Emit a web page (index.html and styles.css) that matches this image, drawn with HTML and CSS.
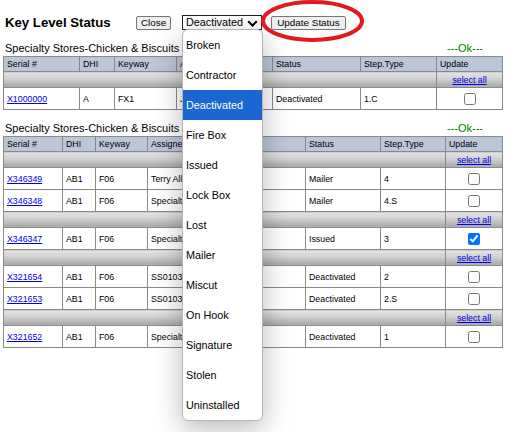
FILE: index.html
```html
<!DOCTYPE html>
<html>
<head>
<meta charset="utf-8">
<title>Key Level Status</title>
<link rel="stylesheet" href="styles.css">
</head>
<body>
<div class="page">
  <div class="topbar">
    <h1 class="title">Key Level Status</h1>
    <button class="btn btn-close">Close</button>
    <div class="select">
      <span>Deactivated</span>
      <svg class="chev" width="11" height="7" viewBox="0 0 11 7"><path d="M1.2 1.2 L5.5 5.5 L9.8 1.2" fill="none" stroke="#000" stroke-width="2"/></svg>
    </div>
    <button class="btn btn-update">Update Status</button>
  </div>

  <section class="group g1">
    <div class="group-head"><span class="store">Specialty Stores-Chicken &amp; Biscuits</span><span class="ok">---Ok---</span></div>
    <table class="keys t1">
      <colgroup><col class="c1"><col class="c2"><col class="c3"><col class="c4"><col class="c5"><col class="c6"><col class="c7"></colgroup>
      <tr class="hdr"><td>Serial #</td><td>DHI</td><td>Keyway</td><td>Assigned To</td><td>Status</td><td>Step.Type</td><td>Update</td></tr>
      <tr class="grp"><td colspan="6"></td><td class="ctr"><a href="#">select all</a></td></tr>
      <tr class="row"><td><a href="#">X1000000</a></td><td>A</td><td>FX1</td><td>John Smith</td><td>Deactivated</td><td>1.C</td><td class="ctr"><input type="checkbox"></td></tr>
    </table>
  </section>

  <section class="group g2">
    <div class="group-head"><span class="store">Specialty Stores-Chicken &amp; Biscuits</span><span class="ok">---Ok---</span></div>
    <table class="keys t2">
      <colgroup><col class="c1"><col class="c2"><col class="c3"><col class="c4"><col class="c5"><col class="c6"><col class="c7"></colgroup>
      <tr class="hdr"><td>Serial #</td><td>DHI</td><td>Keyway</td><td>Assigned To</td><td>Status</td><td>Step.Type</td><td>Update</td></tr>
      <tr class="grp"><td colspan="6"></td><td class="ctr"><a href="#">select all</a></td></tr>
      <tr class="row"><td><a href="#">X346349</a></td><td>AB1</td><td>F06</td><td>Terry Allen</td><td>Mailer</td><td>4</td><td class="ctr"><input type="checkbox"></td></tr>
      <tr class="row"><td><a href="#">X346348</a></td><td>AB1</td><td>F06</td><td>Specialty Stores</td><td>Mailer</td><td>4.S</td><td class="ctr"><input type="checkbox"></td></tr>
      <tr class="grp"><td colspan="6"></td><td class="ctr"><a href="#">select all</a></td></tr>
      <tr class="row"><td><a href="#">X346347</a></td><td>AB1</td><td>F06</td><td>Specialty Stores</td><td>Issued</td><td>3</td><td class="ctr"><input type="checkbox" checked></td></tr>
      <tr class="grp"><td colspan="6"></td><td class="ctr"><a href="#">select all</a></td></tr>
      <tr class="row"><td><a href="#">X321654</a></td><td>AB1</td><td>F06</td><td>SS01031 Store</td><td>Deactivated</td><td>2</td><td class="ctr"><input type="checkbox"></td></tr>
      <tr class="row"><td><a href="#">X321653</a></td><td>AB1</td><td>F06</td><td>SS01031 Store</td><td>Deactivated</td><td>2.S</td><td class="ctr"><input type="checkbox"></td></tr>
      <tr class="grp"><td colspan="6"></td><td class="ctr"><a href="#">select all</a></td></tr>
      <tr class="row"><td><a href="#">X321652</a></td><td>AB1</td><td>F06</td><td>Specialty Stores</td><td>Deactivated</td><td>1</td><td class="ctr"><input type="checkbox"></td></tr>
    </table>
  </section>

  <ul class="dropdown">
    <li>Broken</li>
    <li>Contractor</li>
    <li class="sel">Deactivated</li>
    <li>Fire Box</li>
    <li>Issued</li>
    <li>Lock Box</li>
    <li>Lost</li>
    <li>Mailer</li>
    <li>Miscut</li>
    <li>On Hook</li>
    <li>Signature</li>
    <li>Stolen</li>
    <li>Uninstalled</li>
  </ul>

  <svg class="circle" width="106" height="44" viewBox="0 0 106 44"><ellipse cx="52.5" cy="21" rx="49.5" ry="19" fill="none" stroke="#e01a1f" stroke-width="4"/></svg>
</div>
</body>
</html>
```

FILE: styles.css
```css
html, body {
  margin: 0;
  padding: 0;
  background: #fff;
}
body {
  font-family: "Liberation Sans", Arial, sans-serif;
  color: #000;
}
.page {
  position: relative;
  width: 515px;
  height: 432px;
  overflow: hidden;
}
.topbar {
  display: flex;
  align-items: center;
  height: 15px;
  padding: 15px 0 0 5px;
}
.title {
  margin: 0;
  font-size: 13.2px;
  font-weight: bold;
  line-height: 15px;
  width: 106px;
}
.btn {
  font-family: "Liberation Sans", Arial, sans-serif;
  font-size: 9.9px;
  height: 14px;
  line-height: 12px;
  padding: 0 5px;
  background: #efefef;
  border: 1px solid #767676;
  border-radius: 2px;
  color: #000;
  box-sizing: border-box;
}
.btn-close {
  margin-left: 25px;
  width: 35px;
  padding: 0;
}
.btn-update {
  margin-left: 9px;
  width: 75px;
  padding: 0;
}
.select {
  margin-left: 11px;
  width: 80px;
  height: 15px;
  box-sizing: border-box;
  border: 1px solid #222;
  display: flex;
  align-items: center;
  padding-left: 3px;
  font-size: 10.8px;
  line-height: 13px;
}
.select span {
  flex: 1;
}
.chev {
  margin-right: 3px;
  margin-top: 1px;
}
.group {
  padding-left: 3px;
}
.g1 {
  margin-top: 12px;
}
.g2 {
  margin-top: 12px;
}
.group-head {
  display: flex;
  justify-content: space-between;
  width: 499px;
  box-sizing: border-box;
  padding: 0 19px 0 2px;
  font-size: 11px;
  line-height: 13px;
  margin-bottom: 1px;
}
.ok {
  color: #008000;
}
.keys {
  border-collapse: collapse;
  table-layout: fixed;
  width: 499px;
  font-size: 8.8px;
  border: 1px solid #8a8a8a;
}
.keys td {
  border: 1px solid #8a8a8a;
  padding: 0 3px;
  white-space: nowrap;
  overflow: hidden;
  vertical-align: middle;
}
.t1 .c1 { width: 76px; }
.t1 .c2 { width: 35px; }
.t1 .c3 { width: 62px; }
.t1 .c4 { width: 96px; }
.t1 .c5 { width: 88px; }
.t1 .c6 { width: 76px; }
.t1 .c7 { width: 66px; }
.t2 .c1 { width: 59px; }
.t2 .c2 { width: 33px; }
.t2 .c3 { width: 52px; }
.t2 .c4 { width: 158px; }
.t2 .c5 { width: 75px; }
.t2 .c6 { width: 65px; }
.t2 .c7 { width: 57px; }
.hdr td {
  height: 14px;
  background: #bcc6d9;
}
.grp td {
  height: 15px;
  background: linear-gradient(to bottom, #e4e4e4 0%, #cfcfcf 45%, #ababab 90%, #b9b9b9 100%);
}
.row td {
  height: 21px;
}
.ctr {
  text-align: center;
}
.keys a {
  color: #0000ee;
  text-decoration: underline;
}
.keys input[type=checkbox] {
  width: 12px;
  height: 12px;
  margin: 0;
  vertical-align: middle;
}
.dropdown {
  position: absolute;
  left: 182px;
  top: 29px;
  width: 81px;
  margin: 0;
  padding: 0;
  list-style: none;
  background: #fff;
  border: 1px solid #b5b5b5;
  border-radius: 6px;
  box-sizing: border-box;
  box-shadow: 0 8px 28px rgba(0, 0, 0, 0.28);
  overflow: hidden;
  font-size: 10.8px;
}
.dropdown li {
  height: 30px;
  line-height: 30px;
  padding-left: 3px;
  white-space: nowrap;
}
.dropdown li.sel {
  background: #1a67d2;
  color: #fff;
}
.circle {
  position: absolute;
  left: 260px;
  top: 0;
}
```
